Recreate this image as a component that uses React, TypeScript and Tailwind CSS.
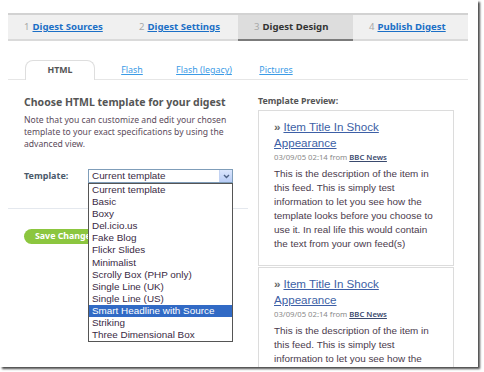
import React from 'react';

const steps = [
  { n: '1', label: 'Digest Sources', active: false },
  { n: '2', label: 'Digest Settings', active: false },
  { n: '3', label: 'Digest Design', active: true },
  { n: '4', label: 'Publish Digest', active: false },
];

const subTabs = ['HTML', 'Flash', 'Flash (legacy)', 'Pictures'];

const templates = [
  'Current template',
  'Basic',
  'Boxy',
  'Del.icio.us',
  'Fake Blog',
  'Flickr Slides',
  'Minimalist',
  'Scrolly Box (PHP only)',
  'Single Line (UK)',
  'Single Line (US)',
  'Smart Headline with Source',
  'Striking',
  'Three Dimensional Box',
];

const description = [
  'This is the description of the item in',
  'this feed. This is simply test',
  'information to let you see how the',
  'template looks before you choose to',
  'use it. In real life this would contain',
  'the text from your own feed(s)',
];

const tahoma = "font-['Noto_Sans','DejaVu_Sans',sans-serif]";
const arial = "font-['Liberation_Sans',Arial,sans-serif]";

// One feed item inside the template preview
const PreviewItem = ({ lines }: { lines: string[] }) => (
  <div className="border border-[#dcdcdc] bg-white pt-[8px] pb-[14px] pl-[15px] pr-[12px]">
    <div className={`${arial} text-[11.6px] leading-[16px] text-[#3d5fa6]`}>
      <span className="font-bold text-[#666] mr-[3px]">»</span>
      <span className="underline">Item Title In Shock</span>
      <br />
      <span className="underline">Appearance</span>
    </div>
    <div className={`${tahoma} text-[7.7px] leading-[12px] text-[#8a8a8a]`}>
      03/09/05 02:14 from <span className="underline text-[#3a4a6e] font-semibold">BBC News</span>
    </div>
    <div className={`${arial} text-[9.9px] leading-[14px] text-[#4a3a4c] mt-[4px] whitespace-nowrap`}>
      {lines.map((l) => (
        <div key={l}>{l}</div>
      ))}
    </div>
  </div>
);

export default function App() {
  return (
    <div className="w-[484px] h-[372px] bg-white overflow-hidden">
      <div className="w-[478px] h-[367px] bg-white overflow-hidden shadow-[2px_2px_2px_rgba(0,0,0,0.7)]">
        {/* Wizard steps */}
        <div className="ml-[8px] mt-[13px] w-[460px] h-[28px] flex bg-[#f0f0f0] border-t-2 border-t-[#d2d2d2] border-b-2 border-b-[#dadada]">
          {steps.map((s) => (
            <div
              key={s.n}
              className={`w-[115px] flex items-center pl-[16px] ${tahoma} text-[9.6px] font-bold ${
                s.active ? 'bg-[#dddddd] border-b-2 border-b-[#7b7b7b] -mb-[2px]' : ''
              }`}
            >
              <span className="text-[#a8a8a8] font-normal mr-[3px]">{s.n}</span>
              <span className={s.active ? 'text-[#333]' : 'text-[#1b6fc6] underline'}>{s.label}</span>
            </div>
          ))}
        </div>

        {/* Sub tabs */}
        <div className="ml-[8px] mt-[19px] w-[460px] h-[20px] flex pl-[16px] border-b border-[#e6e6e6]">
          {subTabs.map((t, i) => (
            <div key={t} className="w-[72px] flex justify-center">
              {i === 0 ? (
                <div
                  className={`w-[70px] h-[20px] bg-white border border-b-0 border-[#dedede] rounded-t-[8px] flex items-center justify-center ${tahoma} text-[8.8px] font-bold text-[#555]`}
                >
                  {t}
                </div>
              ) : (
                <div className={`h-[20px] flex items-center ${tahoma} text-[8.9px] text-[#3b9be6] underline`}>{t}</div>
              )}
            </div>
          ))}
        </div>

        <div className="ml-[8px] flex">
          {/* Left column */}
          <div className="w-[240px] pt-[15px]">
            <div className="pl-[16px]">
              <div className={`${tahoma} text-[10.5px] leading-[14px] font-bold text-[#555]`}>
                Choose HTML template for your digest
              </div>
              <div className={`${tahoma} text-[8.6px] leading-[12px] text-[#5a4a5a] mt-[5px] whitespace-nowrap`}>
                Note that you can customize and edit your chosen
                <br />
                template to your exact specifications by using the
                <br />
                advanced view.
              </div>
              <div className="flex items-center mt-[19px] h-[14px]">
                <div className={`w-[64px] ${tahoma} text-[9px] font-bold text-[#4b5a6b]`}>Template:</div>
                <div className="relative w-[145px] h-[14px] border border-[#7f9db9] bg-white flex items-center">
                  <div className={`flex-1 pl-[3px] ${arial} text-[9.9px] leading-[12px] text-[#3a2a44]`}>
                    Current template
                  </div>
                  <div className="w-[13px] h-[12px] bg-gradient-to-b from-[#dbe6fd] to-[#b9cdf7] border-l border-[#c3d3f3] flex items-center justify-center">
                    <svg width="7" height="5" viewBox="0 0 7 5">
                      <path d="M1 1 L3.5 3.5 L6 1" fill="none" stroke="#4d6185" strokeWidth="1.4" />
                    </svg>
                  </div>
                  {/* Open list */}
                  <div className="absolute left-[-1px] top-[13px] w-[145px] border border-[#555] bg-white z-10">
                    {templates.map((t) => (
                      <div
                        key={t}
                        className={`h-[12.1px] leading-[12px] pl-[3px] ${arial} text-[9.9px] whitespace-nowrap ${
                          t === 'Smart Headline with Source' ? 'bg-[#316ac5] text-white' : 'text-[#3a2a44]'
                        }`}
                      >
                        {t}
                      </div>
                    ))}
                  </div>
                </div>
              </div>
            </div>
            <div className="mt-[25px] border-t border-[#e4e8ee]" />
            <div className="pl-[16px] mt-[20px]">
              <div
                className={`w-[88px] h-[15px] rounded-full bg-[#8cc63f] flex items-center pl-[11px] ${tahoma} text-[8.8px] font-bold text-white`}
              >
                Save Changes
              </div>
            </div>
          </div>

          {/* Right column */}
          <div className="ml-[10px] w-[196px] pt-[15px]">
            <div className={`${tahoma} text-[8.8px] leading-[12px] font-bold text-[#555]`}>Template Preview:</div>
            <div className="mt-[3px] flex flex-col gap-[1px]">
              <PreviewItem lines={description} />
              {/* only the first lines of the second item are in view */}
              <PreviewItem lines={description.slice(0, 3)} />
            </div>
          </div>
        </div>
      </div>
    </div>
  );
}
